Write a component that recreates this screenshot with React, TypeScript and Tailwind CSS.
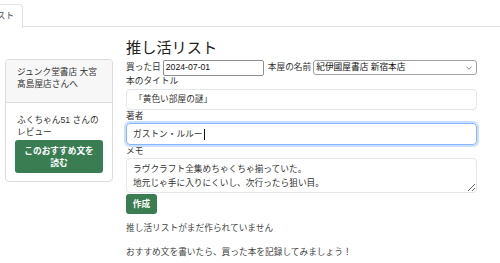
import React from 'react';

const font = { fontFamily: '"Liberation Sans", "Noto Sans CJK JP", sans-serif' };

export default function App() {
  return (
    <div className="w-[500px] h-[263px] overflow-hidden bg-white text-[#212529] text-[8.7px] leading-[13px]" style={font}>
      {/* Tabs */}
      <div className="flex h-[27px] border-b border-[#dee2e6]">
        <div className="ml-[-49px] mt-[4px] h-[24px] pl-[10px] pr-[8px] flex items-center bg-white border border-b-0 border-[#dee2e6] rounded-t-[4px] text-[#495057]">
          推し活リスト
        </div>
      </div>

      <div className="flex pl-[5px]">
        {/* Sidebar */}
        <div className="w-[108px] mt-[32px] self-start border border-[#dcdcdc] rounded-[4px] overflow-hidden">
          <div className="bg-[#f7f7f7] border-b border-[#dcdcdc] px-[11px] pt-[6px] pb-[12px] text-[#333] leading-[12px]">
            ジュンク堂書店 大宮
            <br />
            髙島屋店さんへ
          </div>
          <div className="px-[9px] pt-[11px] pb-[8px]">
            <div className="px-[2px] text-[#333] leading-[12px]">
              ふくちゃん51 さんの
              <br />
              レビュー
            </div>
            <div className="mt-[2px] h-[33px] rounded-[3px] bg-[#3b7d53] text-white font-bold text-center leading-[12px] flex items-center justify-center px-[4px]">
              このおすすめ文を
              <br />
              読む
            </div>
          </div>
        </div>

        {/* Main */}
        <div className="ml-[13px] w-[351px]">
          <div className="mt-[11px] text-[15.2px] leading-[19px] text-[#222]">推し活リスト</div>

          <div className="mt-[2px] flex items-center h-[17px]">
            <span className="text-[#333]">買った日</span>
            <div className="ml-[2px] w-[101px] h-[16px] border border-[#8f8f8f] rounded-[2px] px-[2px] flex items-center text-[#111]">
              2024-07-01
            </div>
            <span className="ml-[4px] text-[#333]">本屋の名前</span>
            <div className="ml-[2px] flex-1 h-[15px] border border-[#a0a0a0] rounded-[3px] pl-[2px] pr-[4px] flex items-center justify-between text-[#111]">
              <span>紀伊國屋書店 新宿本店</span>
              <svg width="6" height="4" viewBox="0 0 6 4" fill="none" stroke="#777" strokeWidth="0.9">
                <path d="M0.5 0.8 L3 3.2 L5.5 0.8" />
              </svg>
            </div>
          </div>

          <div className="mt-[-1px] text-[#333]">本のタイトル</div>
          <div className="mt-[1px] h-[21px] border border-[#e3e6ea] rounded-[4px] px-[7px] flex items-center text-[#333]">
            「黄色い部屋の謎」
          </div>

          <div className="text-[#333]">著者</div>
          <div className="h-[22px] border border-[#86b7fe] rounded-[4px] px-[6px] flex items-center text-[#333] shadow-[0_0_0_2px_rgba(13,110,253,0.22)]">
            ガストン・ルルー
            <span className="ml-[1px] w-[1px] h-[11px] bg-[#111]" />
          </div>

          <div className="text-[#333]">メモ</div>
          <textarea
            readOnly
            className="block w-full h-[35px] border border-[#e3e6ea] rounded-[4px] px-[6px] py-[3px] text-[8.7px] leading-[14px] text-[#333] outline-none resize-y"
            style={font}
            defaultValue={'ラヴクラフト全集めちゃくちゃ揃っていた。\n地元じゃ手に入りにくいし、次行ったら狙い目。'}
          />
          <div className="mt-[1px] w-[31px] h-[20px] rounded-[3px] bg-[#3b7d53] text-white font-bold flex items-center justify-center">
            作成
          </div>

          <div className="mt-[8px] text-[#444]">推し活リストがまだ作られていません</div>
          <div className="mt-[11px] text-[#444]">おすすめ文を書いたら、買った本を記録してみましょう！</div>
        </div>
      </div>
    </div>
  );
}
